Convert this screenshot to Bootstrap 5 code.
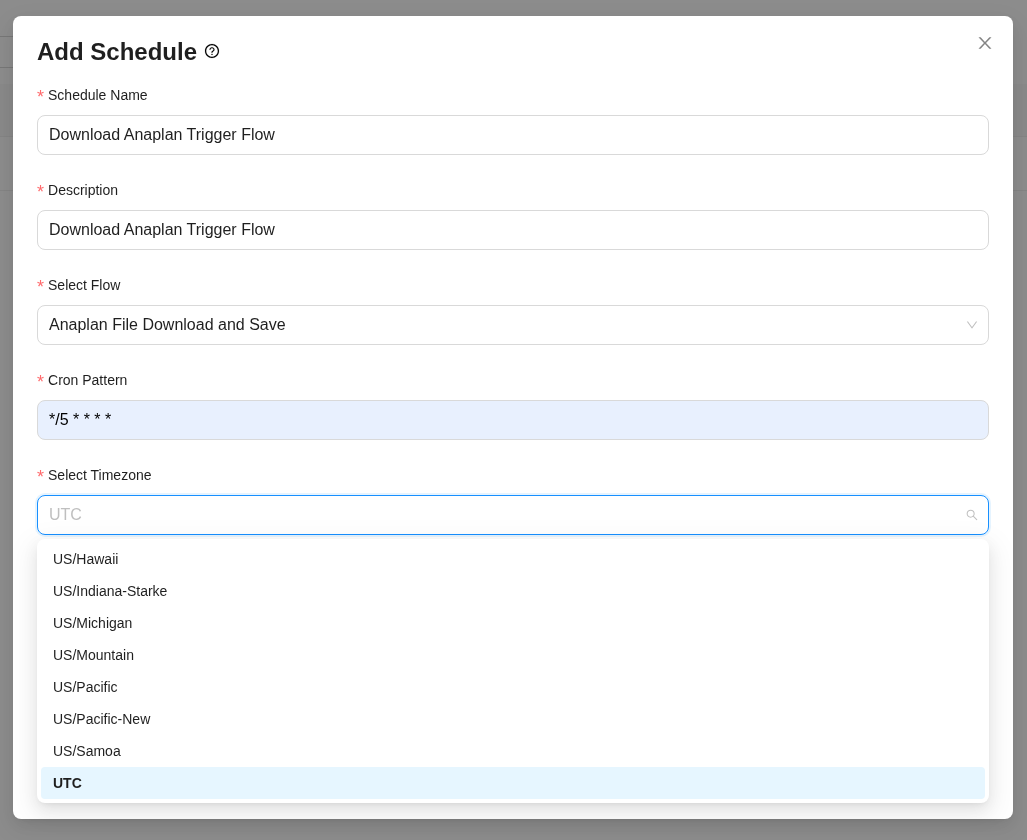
<!DOCTYPE html>
<html lang="en">
<head>
<meta charset="utf-8">
<meta name="viewport" content="width=device-width, initial-scale=1">
<title>Add Schedule</title>
<link href="https://cdn.jsdelivr.net/npm/bootstrap@5.3.0/dist/css/bootstrap.min.css" rel="stylesheet">
<style>
  body { font-family: "Liberation Sans", Arial, sans-serif; font-size: 14px; color: #1f1f1f; background: #fff; }
  .toolbar-edge { width: 50%; height: 32px; margin-top: 36px; border: solid #d9d9d9; border-width: 1px 0; }
  .list-head { height: 53px; margin-top: 16px; background: #fafafa; border-bottom: 1px solid #f0f0f0; }
  .list-line { height: 54px; border-bottom: 1px solid #f0f0f0; }
  .modal-backdrop.show { opacity: .45; }
  .schedule-dialog { max-width: none; margin: 16px 14px 21px 13px; }
  .schedule-dialog .modal-content {
    min-height: calc(100vh - 37px); padding: 20px 24px 24px; border: 0; border-radius: 8px; color: #1f1f1f;
    box-shadow: 0 6px 16px 0 rgba(0,0,0,.08), 0 3px 6px -4px rgba(0,0,0,.12), 0 9px 28px 8px rgba(0,0,0,.05);
  }
  .schedule-title { font-size: 24px; line-height: 32px; font-weight: 700; }
  .help-icon { margin-bottom: 2px; stroke: currentColor; stroke-width: 8; overflow: visible; color: #000; }
  .close-button { position: absolute; top: 16px; right: 17px; width: 22px; height: 22px; color: #858585; line-height: 0; }
  .field-label { height: 23px; line-height: 23px; margin-bottom: 8px; }
  .field-label::before { content: "*"; font-size: 18px; line-height: 0; vertical-align: -3px; color: #ff6b6d; margin-right: 4px; }
  .field-box, .field-box:focus {
    height: 40px; padding: 0 11px; border: 1px solid #d9d9d9; border-radius: 8px;
    font-size: 16px; line-height: 38px; color: #1f1f1f; background: #fff none; box-shadow: none;
  }
  .field-box.autofilled { background: #e8f0fe; color: #000; }
  .field-box.active-box { border-color: #1890ff; box-shadow: 0 0 0 2px rgba(5,145,255,.1); }
  .field-box::placeholder { color: #bfbfbf; opacity: 1; }
  .field-icon { position: absolute; right: 11px; top: 14px; color: #bfbfbf; pointer-events: none; }
  .zone-menu {
    top: 100%; left: 0; margin-top: 4px; padding: 4px; border: 0; border-radius: 8px; font-size: 14px;
    box-shadow: 0 6px 16px 0 rgba(0,0,0,.08), 0 3px 6px -4px rgba(0,0,0,.12), 0 9px 28px 8px rgba(0,0,0,.05);
  }
  .zone-menu .dropdown-item { padding: 5px 12px; line-height: 22px; border-radius: 4px; color: #1f1f1f; }
  .zone-menu .dropdown-item.active { background: #e6f6ff; font-weight: 700; }
</style>
</head>
<body>
<div aria-hidden="true" class="overflow-hidden">
  <div class="toolbar-edge"></div>
  <div class="list-head"></div>
  <div class="list-line"></div>
</div>
<div class="modal-backdrop show"></div>
<div class="modal show d-block" role="dialog" aria-modal="true" aria-labelledby="scheduleTitle">
  <div class="modal-dialog schedule-dialog">
    <form class="modal-content">
      <div class="d-flex align-items-center gap-2 mb-3">
        <h1 class="schedule-title mb-0" id="scheduleTitle">Add Schedule</h1>
        <svg class="help-icon" width="14" height="14" viewBox="64 64 896 896" fill="currentColor" role="img" aria-label="Help"><path d="M512 64C264.600 64 64 264.600 64 512s200.600 448 448 448 448-200.600 448-448S759.400 64 512 64zm0 820c-205.400 0-372-166.600-372-372s166.600-372 372-372 372 166.600 372 372-166.600 372-372 372z"/><path d="M623.600 316.700C593.600 290.400 554 276 512 276s-81.600 14.500-111.600 40.700C369.200 344 352 380.700 352 420v7.600c0 4.400 3.600 8 8 8h48c4.400 0 8-3.600 8-8V420c0-44.100 43.100-80 96-80s96 35.900 96 80c0 31.100-22 59.600-56.100 72.700-21.200 8.100-39.200 22.300-52.100 40.900-13.100 19-19.900 41.800-19.900 64.900V620c0 4.400 3.600 8 8 8h48c4.400 0 8-3.600 8-8v-22.700a48.300 48.300 0 0130.900-44.800c59-22.700 97.100-74.700 97.100-132.500.1-39.300-17.100-76-48.300-103.300zM472 732a40 40 0 1080 0 40 40 0 10-80 0z"/></svg>
        <button type="button" class="btn p-0 border-0 close-button" aria-label="Close"><svg width="18" height="16" viewBox="64 64 896 896" preserveAspectRatio="none" fill="currentColor"><path d="M563.800 512l262.500-312.900c4.400-5.200.7-13.100-6.100-13.100h-79.800c-4.700 0-9.200 2.100-12.300 5.700L511.600 449.800 295.100 191.700c-3-3.600-7.500-5.700-12.300-5.700H203c-6.800 0-10.500 7.900-6.100 13.100L459.400 512 196.900 824.900A7.950 7.950 0 00203 838h79.800c4.700 0 9.200-2.100 12.300-5.700l216.500-258.100 216.500 258.100c3 3.600 7.500 5.700 12.300 5.700h79.800c6.800 0 10.500-7.900 6.100-13.100L563.800 512z"/></svg></button>
      </div>
      <div class="mb-4">
        <label class="field-label d-block" for="scheduleName">Schedule Name</label>
        <input class="form-control field-box" id="scheduleName" type="text" value="Download Anaplan Trigger Flow">
      </div>
      <div class="mb-4">
        <label class="field-label d-block" for="description">Description</label>
        <input class="form-control field-box" id="description" type="text" value="Download Anaplan Trigger Flow">
      </div>
      <div class="mb-4">
        <label class="field-label d-block" for="flow">Select Flow</label>
        <div class="position-relative">
          <select class="form-select field-box" id="flow"><option>Anaplan File Download and Save</option></select>
          <svg class="field-icon" width="12" height="12" viewBox="64 64 896 896" fill="currentColor" aria-hidden="true"><path d="M884 256h-75c-5.100 0-9.900 2.500-12.900 6.600L512 654.200 227.900 262.600c-3-4.100-7.800-6.600-12.900-6.600h-75c-6.500 0-10.300 7.400-6.500 12.700l352.600 486.100c12.800 17.600 39 17.600 51.700 0l352.600-486.100c3.900-5.300.1-12.700-6.400-12.700z"/></svg>
        </div>
      </div>
      <div class="mb-4">
        <label class="field-label d-block" for="cron">Cron Pattern</label>
        <input class="form-control field-box autofilled" id="cron" type="text" value="*/5 * * * *">
      </div>
      <div>
        <label class="field-label d-block" for="timezone">Select Timezone</label>
        <div class="dropdown position-relative">
          <input class="form-control field-box active-box" id="timezone" type="text" placeholder="UTC" role="combobox" aria-expanded="true" aria-controls="zoneList" autocomplete="off">
          <svg class="field-icon" width="12" height="12" viewBox="64 64 896 896" fill="currentColor" aria-hidden="true"><path d="M909.600 854.500L649.900 594.800C690.200 542.700 712 479 712 412c0-80.200-31.300-155.400-87.900-212.100-56.600-56.700-132-87.900-212.100-87.900s-155.500 31.300-212.100 87.900C143.200 256.500 112 331.800 112 412c0 80.100 31.300 155.500 87.900 212.100C256.500 680.800 331.800 712 412 712c67 0 130.600-21.800 182.700-62l259.700 259.600a8.200 8.200 0 0011.600 0l43.600-43.500a8.200 8.200 0 000-11.600zM570.400 570.400C528 612.700 471.800 636 412 636s-116-23.300-158.400-65.600C211.300 528 188 471.800 188 412s23.300-116.100 65.600-158.400C296 211.300 352.200 188 412 188s116.100 23.200 158.400 65.600S636 352.200 636 412s-23.300 116.100-65.600 158.400z"/></svg>
          <div class="dropdown-menu show w-100 zone-menu" id="zoneList" role="listbox">
            <button type="button" class="dropdown-item" role="option">US/Hawaii</button>
            <button type="button" class="dropdown-item" role="option">US/Indiana-Starke</button>
            <button type="button" class="dropdown-item" role="option">US/Michigan</button>
            <button type="button" class="dropdown-item" role="option">US/Mountain</button>
            <button type="button" class="dropdown-item" role="option">US/Pacific</button>
            <button type="button" class="dropdown-item" role="option">US/Pacific-New</button>
            <button type="button" class="dropdown-item" role="option">US/Samoa</button>
            <button type="button" class="dropdown-item active" role="option" aria-selected="true">UTC</button>
          </div>
        </div>
      </div>
    </form>
  </div>
</div>
<script src="https://cdn.jsdelivr.net/npm/bootstrap@5.3.0/dist/js/bootstrap.bundle.min.js"></script>
</body>
</html>
